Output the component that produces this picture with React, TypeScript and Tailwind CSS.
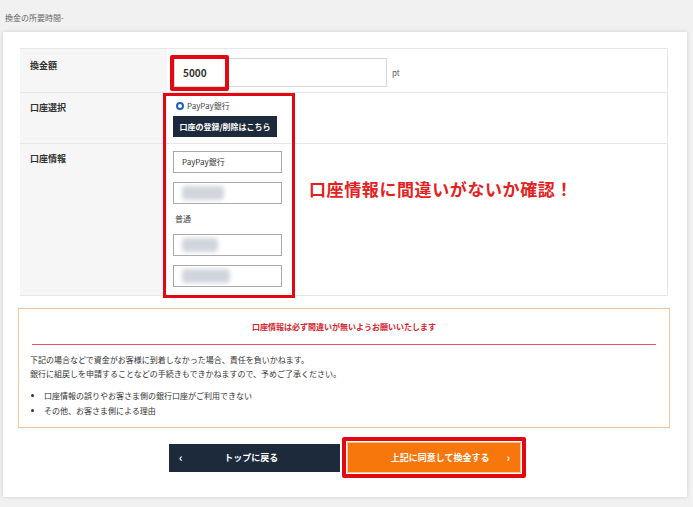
import React from 'react';

const font = { fontFamily: '"Noto Sans CJK JP", "Noto Sans", sans-serif' };

const Blur: React.FC<{ w: string }> = ({ w }) => (
  <div className={`h-[14px] ${w} bg-gray-300 blur-[2px] rounded-sm`} />
);

const Field: React.FC<{ children?: React.ReactNode }> = ({ children }) => (
  <div className="w-[109px] h-[22px] border border-[#a9a9a9] bg-white flex items-center px-[8px] text-[8px] text-[#333]">
    {children}
  </div>
);

export default function App() {
  return (
    <div className="w-[693px] h-[507px] bg-[#f1f1f1] overflow-hidden" style={font}>
      {/* page caption */}
      <div className="pl-[5px] pt-[12px] h-[32px] text-[8px] text-[#666]">換金の所要時間-</div>

      {/* main card */}
      <div className="ml-[3px] w-[684px] h-[465px] bg-white shadow-[0_0_4px_rgba(0,0,0,0.15)] pt-[16px] pl-[17px]">
        <div className="relative w-[648px] border-t border-r border-[#e6e6e6] text-[#333]">
          {/* row 1 */}
          <div className="flex h-[44px] border-b border-[#e6e6e6]">
            <div className="w-[147px] bg-[#f6f6f6] pl-[10px] pt-[10px] text-[9px] font-bold">換金額</div>
            <div className="flex-1 flex items-center pl-[7px] pt-[4px]">
              <div className="w-[213px] h-[29px] border border-[#d8d8d8] flex items-center pl-[8px] text-[10px] font-bold">5000</div>
              <span className="ml-[5px] text-[8px] text-[#555]">pt</span>
            </div>
          </div>
          {/* row 2 */}
          <div className="flex h-[51px] border-b border-[#e6e6e6]">
            <div className="w-[147px] bg-[#f6f6f6] pl-[10px] pt-[8px] text-[9px] font-bold">口座選択</div>
            <div className="flex-1 pl-[6px] pt-[7px]">
              <div className="flex items-center gap-[3px] pl-[3px] text-[8px] text-[#444]">
                <span className="w-[8px] h-[8px] rounded-full border-[2.5px] border-[#1d5fc4] bg-white" />
                PayPay銀行
              </div>
              <div className="mt-[4px] w-[104px] h-[21px] bg-[#1d2a3c] text-white text-[8px] font-bold flex items-center justify-center">
                口座の登録/削除はこちら
              </div>
            </div>
          </div>
          {/* row 3 */}
          <div className="flex h-[152px] border-b border-[#e6e6e6]">
            <div className="w-[147px] bg-[#f6f6f6] pl-[10px] pt-[8px] text-[9px] font-bold">口座情報</div>
            <div className="flex-1 flex pl-[6px] pt-[7px]">
              <div className="flex flex-col">
                <Field>PayPay銀行</Field>
                <div className="mt-[9px]"><Field><Blur w="w-[42px]" /></Field></div>
                <div className="mt-[8px] h-[14px] pl-[2px] text-[8px] leading-[14px] text-[#444]">普通</div>
                <div className="mt-[8px]"><Field><Blur w="w-[36px]" /></Field></div>
                <div className="mt-[9px]"><Field><Blur w="w-[48px]" /></Field></div>
              </div>
              <div className="ml-[27px] mt-[25px] text-[17px] font-bold text-[#e4211f] tracking-[0.6px]">
                口座情報に間違いがないか確認！
              </div>
            </div>
          </div>

          {/* red annotation frames */}
          <div className="absolute left-[150px] top-[6px] w-[59px] h-[36px] border-[4px] border-[#e30613] rounded-[2px]" />
          <div className="absolute left-[143px] top-[44px] w-[132px] h-[205px] border-[3px] border-[#e30613]" />
        </div>

        {/* notice */}
        <div className="mt-[12px] -ml-[2px] w-[652px] h-[120px] border-[1.5px] border-[#efc79d] px-[13px]">
          <div className="h-[36px] border-b border-[#e0536b] flex items-center justify-center text-[8px] text-[#d9232e] font-bold">
            口座情報は必ず間違いが無いようお願いいたします
          </div>
          <div className="pt-[8px] -ml-[2px] text-[8px] leading-[14px] text-[#333]">
            <p>下記の場合などで資金がお客様に到着しなかった場合、責任を負いかねます。</p>
            <p>銀行に組戻しを申請することなどの手続きもできかねますので、予めご了承ください。</p>
            <ul className="mt-[7px] list-disc pl-[14px] leading-[15px]">
              <li>口座情報の誤りやお客さま側の銀行口座がご利用できない</li>
              <li>その他、お客さま側による理由</li>
            </ul>
          </div>
        </div>

        {/* buttons */}
        <div className="mt-[9px] flex items-center pl-[149px]">
          <button className="w-[171px] h-[28px] bg-[#1d2a3c] text-white text-[9px] font-bold flex items-center px-[10px]">
            <span className="text-[11px]">‹</span>
            <span className="flex-1 text-center pr-[10px]">トップに戻る</span>
          </button>
          <div className="ml-[2px] w-[184px] h-[41px] border-[4px] border-[#e30613] rounded-[2px] p-[1px]">
            <div className="w-full h-full bg-[#f7770c] border border-[#ffc48f] text-white text-[9px] font-bold flex items-center px-[10px]">
              <span className="flex-1 text-center pl-[16px]">上記に同意して換金する</span>
              <span className="text-[11px]">›</span>
            </div>
          </div>
        </div>
      </div>
    </div>
  );
}
